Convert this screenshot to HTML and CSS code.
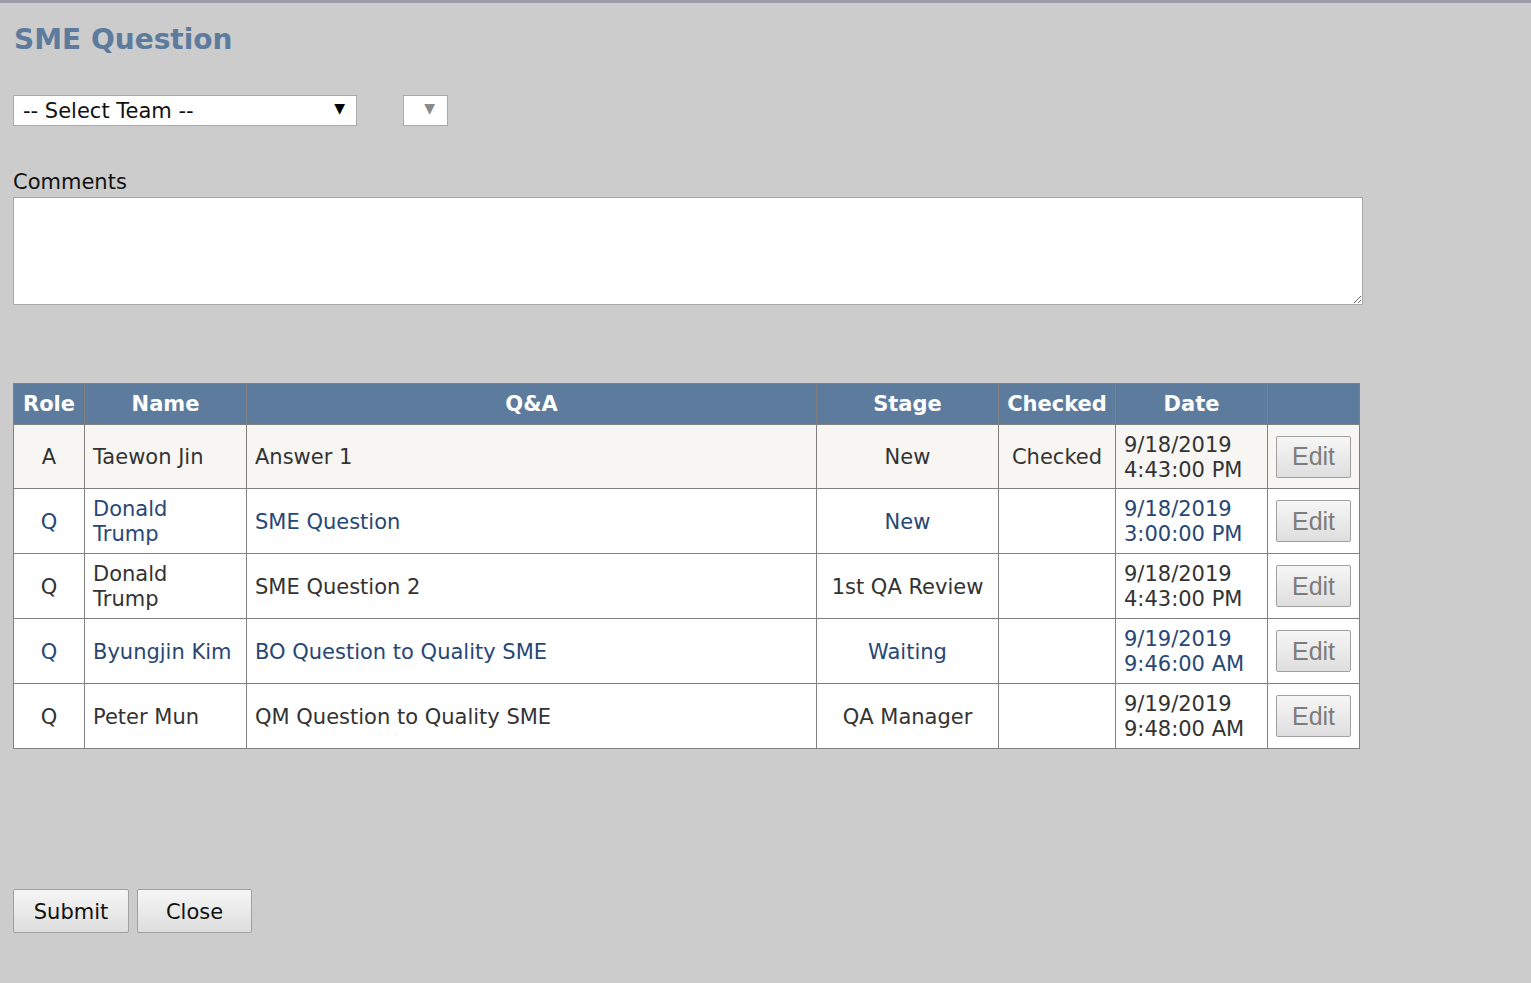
FILE: index.html
```html
<!DOCTYPE html>
<html lang="en">
<head>
    <meta charset="UTF-8">
    <meta name="viewport" content="width=device-width, initial-scale=1.0">
    <title>SME Question</title>
    <link rel="stylesheet" href="styles.css">
</head>
<body>
    <div class="page">
        <h1 class="title">SME Question</h1>

        <div class="filters">
            <div class="select-wrap team">
                <select class="select">
                    <option>-- Select Team --</option>
                </select>
            </div>
            <div class="select-wrap member disabled">
                <select class="select" disabled>
                    <option></option>
                </select>
            </div>
        </div>

        <label class="comments-label" for="comments">Comments</label>
        <textarea class="comments" id="comments"></textarea>

        <table class="grid">
            <colgroup>
                <col class="c-role">
                <col class="c-name">
                <col class="c-qa">
                <col class="c-stage">
                <col class="c-checked">
                <col class="c-date">
                <col class="c-edit">
            </colgroup>
            <thead>
                <tr>
                    <th>Role</th>
                    <th>Name</th>
                    <th>Q&amp;A</th>
                    <th>Stage</th>
                    <th>Checked</th>
                    <th>Date</th>
                    <th></th>
                </tr>
            </thead>
            <tbody>
                <tr class="selected">
                    <td class="center">A</td>
                    <td>Taewon Jin</td>
                    <td>Answer 1</td>
                    <td class="center">New</td>
                    <td class="center">Checked</td>
                    <td>9/18/2019<br>4:43:00 PM</td>
                    <td class="center"><button class="edit">Edit</button></td>
                </tr>
                <tr class="alt">
                    <td class="center">Q</td>
                    <td>Donald<br>Trump</td>
                    <td>SME Question</td>
                    <td class="center">New</td>
                    <td class="center"></td>
                    <td>9/18/2019<br>3:00:00 PM</td>
                    <td class="center"><button class="edit">Edit</button></td>
                </tr>
                <tr>
                    <td class="center">Q</td>
                    <td>Donald<br>Trump</td>
                    <td>SME Question 2</td>
                    <td class="center">1st QA Review</td>
                    <td class="center"></td>
                    <td>9/18/2019<br>4:43:00 PM</td>
                    <td class="center"><button class="edit">Edit</button></td>
                </tr>
                <tr class="alt">
                    <td class="center">Q</td>
                    <td>Byungjin Kim</td>
                    <td>BO Question to Quality SME</td>
                    <td class="center">Waiting</td>
                    <td class="center"></td>
                    <td>9/19/2019<br>9:46:00 AM</td>
                    <td class="center"><button class="edit">Edit</button></td>
                </tr>
                <tr>
                    <td class="center">Q</td>
                    <td>Peter Mun</td>
                    <td>QM Question to Quality SME</td>
                    <td class="center">QA Manager</td>
                    <td class="center"></td>
                    <td>9/19/2019<br>9:48:00 AM</td>
                    <td class="center"><button class="edit">Edit</button></td>
                </tr>
            </tbody>
        </table>

        <div class="actions">
            <button class="btn">Submit</button>
            <button class="btn">Close</button>
        </div>
    </div>
</body>
</html>
```

FILE: styles.css
```css
body {
    margin: 0;
    padding: 0;
    background-color: #cccccc;
    border-top: 3px solid #9d9daa;
    font-family: "DejaVu Sans", Verdana, sans-serif;
    font-size: 21px;
    color: #111111;
}
.page {
    padding: 0 13px;
}
.title {
    margin: 19px 0 0 1px;
    font-size: 28px;
    line-height: 35px;
    color: #5d7b9d;
}
.filters {
    display: flex;
    gap: 46px;
    margin-top: 38px;
}
.select-wrap {
    position: relative;
    height: 31px;
    box-sizing: border-box;
    border: 1px solid #a9a9a9;
    background-color: #ffffff;
}
.select-wrap.team {
    width: 344px;
}
.select-wrap.member {
    width: 45px;
}
.select-wrap::after {
    content: "\25BC";
    position: absolute;
    top: 4px;
    right: 11px;
    font-size: 14px;
    color: #000000;
    pointer-events: none;
}
.select-wrap.disabled::after {
    color: #8a8a8a;
    right: 12px;
}
.select {
    appearance: none;
    -webkit-appearance: none;
    width: 100%;
    height: 100%;
    border: none;
    background: transparent;
    font-family: inherit;
    font-size: 21px;
    color: #111111;
    padding: 0 0 0 9px;
    outline: none;
}
.comments-label {
    display: block;
    margin: 44px 0 0 0;
    line-height: 25px;
}
.comments {
    display: block;
    width: 1350px;
    height: 108px;
    box-sizing: border-box;
    margin-top: 2px;
    border: 1px solid #a9a9a9;
    background-color: #ffffff;
    resize: both;
}
.grid {
    margin-top: 78px;
    border-collapse: collapse;
    table-layout: fixed;
    width: 1346px;
    background-color: #ffffff;
    color: #333333;
}
.c-role { width: 71px; }
.c-name { width: 162px; }
.c-qa { width: 570px; }
.c-stage { width: 182px; }
.c-checked { width: 117px; }
.c-date { width: 152px; }
.c-edit { width: 92px; }
.grid th,
.grid td {
    border: 1px solid #808080;
    padding: 2px 8px 0;
    line-height: 25px;
    text-align: left;
}
.grid th {
    height: 39px;
    background-color: #5d7b9d;
    color: #ffffff;
    font-weight: bold;
    text-align: center;
    padding: 1px 0 0;
}
.grid td {
    height: 62px;
}
.grid tr.selected td {
    height: 61px;
}
.grid td.center {
    text-align: center;
    padding: 2px 0 0;
}
.grid tr.selected {
    background-color: #f7f6f3;
}
.grid tr.alt {
    color: #284775;
}
.edit {
    width: 75px;
    height: 42px;
    border: 1px solid #a0a0a0;
    border-radius: 2px;
    background: linear-gradient(#f6f6f6, #dedede);
    font-family: "Liberation Sans", Arial, sans-serif;
    font-size: 25px;
    color: #7d7d7d;
    padding: 0;
    margin-top: -2px;
}
.actions {
    display: flex;
    gap: 8px;
    margin-top: 140px;
}
.btn {
    height: 44px;
    padding: 2px 18px 0;
    border: 1px solid #a0a0a0;
    border-radius: 2px;
    background: linear-gradient(#f6f6f6, #dddddd);
    font-family: "DejaVu Sans", Verdana, sans-serif;
    font-size: 21px;
    color: #111111;
}
.btn:first-child {
    width: 116px;
}
.btn:last-child {
    width: 115px;
}
```
